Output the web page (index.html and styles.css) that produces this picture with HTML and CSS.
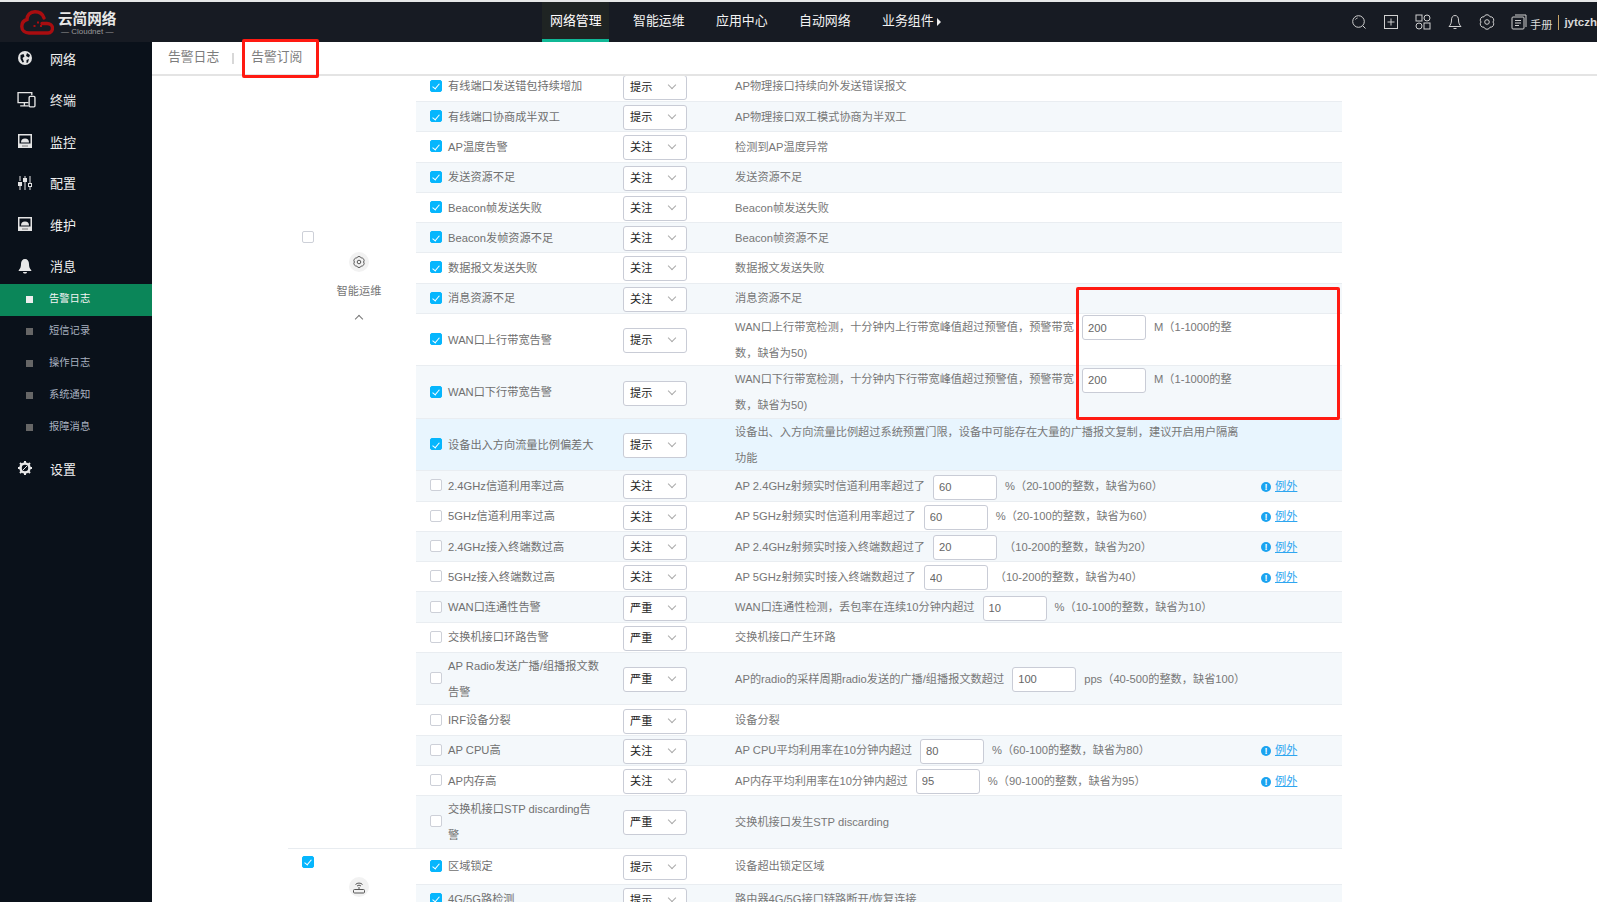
FILE: index.html
```html
<!DOCTYPE html>
<html lang="zh-CN">
<head>
<meta charset="utf-8">
<title>告警订阅</title>
<link rel="stylesheet" href="styles.css">
</head>
<body>
<div class="app">
  <header class="topbar">
    <div class="logo">
      <svg class="logo-cloud" viewBox="0 0 34 25" fill="none"><path d="M24 8C22.500 3.500 18.500 1.800 15 1.800 10 1.800 7 5 7 9.500 3.500 10.500 1.800 13 1.800 16.500 1.800 20.500 5 23 9 23H28C31 23 32.500 20.500 32.500 18 32.500 15.500 30 13.500 27 13.500H22" stroke="#a90d10" stroke-width="3.400" stroke-linecap="round"/><path d="M13.500 15h2v2h-2zM17 11.500h2v2h-2zM20 15h2v2h-2z" fill="#a90d10"/></svg>
      <div class="logo-text">
        <div class="logo-name">云简网络</div>
        <div class="logo-sub">— Cloudnet —</div>
      </div>
    </div>
    <nav class="topnav">
      <a class="topnav-item is-active">网络管理</a>
      <a class="topnav-item">智能运维</a>
      <a class="topnav-item">应用中心</a>
      <a class="topnav-item">自动网络</a>
      <a class="topnav-item">业务组件<span class="caret"></span></a>
    </nav>
    <div class="tools">
      <svg class="tool" viewBox="0 0 16 16" fill="none" stroke="#d0d0d0"><circle cx="7.500" cy="7.500" r="5.800"/><path d="M11.800 11.800L14.500 14.500M4.500 5.500A3.500 3.500 0 0 1 6.500 4"/></svg>
      <svg class="tool" viewBox="0 0 16 16" fill="none" stroke="#d0d0d0"><rect x="1.500" y="1.500" width="13" height="13"/><path d="M8 4.500v7M4.500 8h7"/></svg>
      <svg class="tool" viewBox="0 0 16 16" fill="none" stroke="#d0d0d0"><rect x="1" y="1" width="6" height="6"/><circle cx="12" cy="4" r="3"/><circle cx="4" cy="12" r="3"/><rect x="9" y="9" width="6" height="6"/></svg>
      <svg class="tool" viewBox="0 0 16 16" fill="none" stroke="#d0d0d0"><path d="M8 1.500C5.500 1.500 4.500 3.500 4.500 6c0 3-1 5-2.500 6.500h12C12.500 11 11.500 9 11.500 6c0-2.500-1-4.500-3.500-4.500zM6.500 14.500h3"/></svg>
      <svg class="tool" viewBox="0 0 16 16" fill="none" stroke="#d0d0d0"><path d="M11 2.800A3.200 3.200 0 0 1 14 8 3.200 3.200 0 0 1 11 13.200 3.200 3.200 0 0 1 5 13.200 3.200 3.200 0 0 1 2 8 3.200 3.200 0 0 1 5 2.800 3.200 3.200 0 0 1 11 2.800z"/><circle cx="8" cy="8" r="2.300"/></svg>
      <svg class="tool tool-doc" viewBox="0 0 16 16" fill="none" stroke="#d0d0d0"><path d="M4 1h11v12"/><rect x="1" y="3" width="12" height="12" rx="1"/><path d="M4 6.500h6M4 9h6M4 11.500h4"/></svg>
      <span class="manual">手册</span>
      <span class="tool-sep"></span>
      <span class="user">jytczha</span>
    </div>
  </header>

  <div class="body">
    <aside class="sidebar">
      <div class="menu-item">
        <svg class="menu-icon" viewBox="0 0 16 16"><circle cx="8" cy="8" r="7" fill="#e4e4e4"/><path d="M3.500 5l3-1 1 2.500-2 1.500 1.500 4-1.500.5-2-3.500zM10 3l3 2-1 2.500-3-1.500zM9.500 10l2.500-1-1 3.500-1.500.5z" fill="#0a111a"/></svg>
        <span>网络</span>
      </div>
      <div class="menu-item">
        <svg class="menu-icon menu-icon-wide" viewBox="0 0 18 16" fill="none" stroke="#e4e4e4" stroke-width="1.300"><path d="M11 11H1V1.500h13V4M3 14h8M7 11v3"/><rect x="11.500" y="5" width="5.500" height="10" rx="1"/></svg>
        <span>终端</span>
      </div>
      <div class="menu-item">
        <svg class="menu-icon" viewBox="0 0 16 16"><rect x="1" y="1" width="14" height="14" fill="#e4e4e4"/><rect x="2.500" y="2.500" width="11" height="8" fill="#0a111a"/><path d="M4 9.500a4 4 0 0 1 8 0z" fill="#e4e4e4"/><path d="M5 12.500h6v1H5z" fill="#777"/></svg>
        <span>监控</span>
      </div>
      <div class="menu-item">
        <svg class="menu-icon" viewBox="0 0 16 16" fill="#e4e4e4"><path d="M2.500 1h1v5h-1zM2.500 11h1v4h-1zM7.500 1h1v2h-1zM7.500 7h1v8h-1zM12.500 1h1v7h-1zM12.500 12h1v3h-1z"/><rect x="1" y="7" width="4" height="4"/><rect x="6" y="3" width="4" height="4"/><rect x="11.500" y="8.500" width="3" height="3" fill="none" stroke="#e4e4e4"/></svg>
        <span>配置</span>
      </div>
      <div class="menu-item">
        <svg class="menu-icon" viewBox="0 0 16 16"><rect x="1" y="1" width="14" height="14" fill="#e4e4e4"/><rect x="2.500" y="2.500" width="11" height="8" fill="#0a111a"/><path d="M4 9.500a4 4 0 0 1 8 0z" fill="#e4e4e4"/><path d="M5 12.500h6v1H5z" fill="#777"/></svg>
        <span>维护</span>
      </div>
      <div class="menu-item">
        <svg class="menu-icon" viewBox="0 0 16 16" fill="#e8e8e8"><path d="M8 1C5.500 1 4 3 4 6c0 3-.8 4.800-2.300 6.200v.8h12.600v-.8C12.800 10.800 12 9 12 6c0-3-1.500-5-4-5zM6 14h4c0 1-1 1.500-2 1.500S6 15 6 14z"/></svg>
        <span>消息</span>
      </div>
      <ul class="submenu">
        <li class="sub-item is-active">告警日志</li>
        <li class="sub-item">短信记录</li>
        <li class="sub-item">操作日志</li>
        <li class="sub-item">系统通知</li>
        <li class="sub-item">报障消息</li>
      </ul>
      <div class="menu-item">
        <svg class="menu-icon" viewBox="0 0 16 16" fill="none"><circle cx="8" cy="8" r="4.500" stroke="#e8e8e8" stroke-width="2.600"/><path d="M8 1v3M8 12v3M1 8h3M12 8h3M3 3l2.100 2.100M10.900 10.900L13 13M13 3l-2.100 2.100M5.100 10.900L3 13" stroke="#e8e8e8" stroke-width="2"/><path d="M6 10l4-4" stroke="#e8e8e8" stroke-width="1"/></svg>
        <span>设置</span>
      </div>
    </aside>

    <main class="main">
      <div class="tabs">
        <span class="tab">告警日志</span>
        <span class="tab-sep"></span>
        <span class="tab">告警订阅</span>
      </div>
      <div class="scroll">
        <section class="group">
          <div class="group-side group-side-first">
            <span class="check"></span>
            <svg class="group-icon" viewBox="0 0 20 20" fill="none"><circle cx="10" cy="10" r="10" fill="#f2f2f2"/><path d="M12.300 6A2.500 2.500 0 0 1 14.600 10 2.500 2.500 0 0 1 12.300 14 2.500 2.500 0 0 1 7.700 14 2.500 2.500 0 0 1 5.400 10 2.500 2.500 0 0 1 7.700 6 2.500 2.500 0 0 1 12.300 6z" stroke="#555"/><circle cx="10" cy="10" r="1.800" stroke="#555"/></svg>
            <span class="group-name">智能运维</span>
            <span class="group-fold"></span>
          </div>
          <div class="group-rows">
            <div class="row"><span class="check is-on"></span><div class="label">有线端口发送错包持续增加</div><div class="select">提示</div><div class="desc">AP物理接口持续向外发送错误报文</div></div>
            <div class="row"><span class="check is-on"></span><div class="label">有线端口协商成半双工</div><div class="select">提示</div><div class="desc">AP物理接口双工模式协商为半双工</div></div>
            <div class="row"><span class="check is-on"></span><div class="label">AP温度告警</div><div class="select">关注</div><div class="desc">检测到AP温度异常</div></div>
            <div class="row"><span class="check is-on"></span><div class="label">发送资源不足</div><div class="select">关注</div><div class="desc">发送资源不足</div></div>
            <div class="row"><span class="check is-on"></span><div class="label">Beacon帧发送失败</div><div class="select">关注</div><div class="desc">Beacon帧发送失败</div></div>
            <div class="row"><span class="check is-on"></span><div class="label">Beacon发帧资源不足</div><div class="select">关注</div><div class="desc">Beacon帧资源不足</div></div>
            <div class="row"><span class="check is-on"></span><div class="label">数据报文发送失败</div><div class="select">关注</div><div class="desc">数据报文发送失败</div></div>
            <div class="row"><span class="check is-on"></span><div class="label">消息资源不足</div><div class="select">关注</div><div class="desc">消息资源不足</div></div>
            <div class="row"><span class="check is-on"></span><div class="label">WAN口上行带宽告警</div><div class="select">提示</div><div class="desc">WAN口上行带宽检测，十分钟内上行带宽峰值超过预警值，预警带宽<input class="num" value="200">M（1-1000的整数，缺省为50)</div></div>
            <div class="row"><span class="check is-on"></span><div class="label">WAN口下行带宽告警</div><div class="select">提示</div><div class="desc">WAN口下行带宽检测，十分钟内下行带宽峰值超过预警值，预警带宽<input class="num" value="200">M（1-1000的整数，缺省为50)</div></div>
            <div class="row is-hover"><span class="check is-on"></span><div class="label">设备出入方向流量比例偏差大</div><div class="select">提示</div><div class="desc">设备出、入方向流量比例超过系统预置门限，设备中可能存在大量的广播报文复制，建议开启用户隔离功能</div></div>
            <div class="row"><span class="check"></span><div class="label">2.4GHz信道利用率过高</div><div class="select">关注</div><div class="desc">AP 2.4GHz射频实时信道利用率超过了<input class="num" value="60">%（20-100的整数，缺省为60）</div><div class="extra"><span class="info">!</span><a class="link">例外</a></div></div>
            <div class="row"><span class="check"></span><div class="label">5GHz信道利用率过高</div><div class="select">关注</div><div class="desc">AP 5GHz射频实时信道利用率超过了<input class="num" value="60">%（20-100的整数，缺省为60）</div><div class="extra"><span class="info">!</span><a class="link">例外</a></div></div>
            <div class="row"><span class="check"></span><div class="label">2.4GHz接入终端数过高</div><div class="select">关注</div><div class="desc">AP 2.4GHz射频实时接入终端数超过了<input class="num num-tight" value="20">（10-200的整数，缺省为20）</div><div class="extra"><span class="info">!</span><a class="link">例外</a></div></div>
            <div class="row"><span class="check"></span><div class="label">5GHz接入终端数过高</div><div class="select">关注</div><div class="desc">AP 5GHz射频实时接入终端数超过了<input class="num num-tight" value="40">（10-200的整数，缺省为40）</div><div class="extra"><span class="info">!</span><a class="link">例外</a></div></div>
            <div class="row"><span class="check"></span><div class="label">WAN口连通性告警</div><div class="select">严重</div><div class="desc">WAN口连通性检测，丢包率在连续10分钟内超过<input class="num" value="10">%（10-100的整数，缺省为10）</div></div>
            <div class="row"><span class="check"></span><div class="label">交换机接口环路告警</div><div class="select">严重</div><div class="desc">交换机接口产生环路</div></div>
            <div class="row"><span class="check"></span><div class="label">AP Radio发送广播/组播报文数告警</div><div class="select">严重</div><div class="desc desc-line">AP的radio的采样周期radio发送的广播/组播报文数超过<input class="num" value="100">pps（40-500的整数，缺省100）</div></div>
            <div class="row"><span class="check"></span><div class="label">IRF设备分裂</div><div class="select">严重</div><div class="desc">设备分裂</div></div>
            <div class="row"><span class="check"></span><div class="label">AP CPU高</div><div class="select">关注</div><div class="desc">AP CPU平均利用率在10分钟内超过<input class="num" value="80">%（60-100的整数，缺省为80）</div><div class="extra"><span class="info">!</span><a class="link">例外</a></div></div>
            <div class="row"><span class="check"></span><div class="label">AP内存高</div><div class="select">关注</div><div class="desc">AP内存平均利用率在10分钟内超过<input class="num" value="95">%（90-100的整数，缺省为95）</div><div class="extra"><span class="info">!</span><a class="link">例外</a></div></div>
            <div class="row"><span class="check"></span><div class="label">交换机接口STP discarding告警</div><div class="select">严重</div><div class="desc">交换机接口发生STP discarding</div></div>
          </div>
        </section>
        <section class="group">
          <div class="group-side">
            <span class="check is-on"></span>
            <svg class="group-icon" viewBox="0 0 20 20" fill="none"><circle cx="10" cy="10" r="10" fill="#f2f2f2"/><path d="M6.500 7.500a5 5 0 0 1 7 0M8 9a3 3 0 0 1 4 0M10 10v3" stroke="#555"/><rect x="4.500" y="12.500" width="11" height="3.500" rx="1" stroke="#555"/></svg>
          </div>
          <div class="group-rows">
            <div class="row row-first"><span class="check is-on"></span><div class="label">区域锁定</div><div class="select">提示</div><div class="desc">设备超出锁定区域</div></div>
            <div class="row"><span class="check is-on"></span><div class="label">4G/5G路检测</div><div class="select">提示</div><div class="desc">路由器4G/5G接口链路断开/恢复连接</div></div>
          </div>
        </section>
      </div>
    </main>
  </div>
  <div class="mark mark-tab"></div>
  <div class="mark mark-inputs"></div>
</div>
</body>
</html>
```
FILE: styles.css
```css
* { box-sizing: border-box; }
html, body { margin: 0; height: 100%; }
body {
  font-family: "Liberation Sans", "Noto Sans CJK SC", sans-serif;
  font-size: 11.2px;
  color: #777;
  background: #fff;
  overflow: hidden;
}
.app { position: relative; height: 902px; display: flex; flex-direction: column; overflow: hidden; }

/* top bar */
.topbar {
  flex: none;
  height: 42px;
  display: flex;
  border-top: 2px solid #e6e7e8;
  background: #171b23;
  color: #fff;
}
.logo { width: 542px; display: flex; align-items: flex-start; padding: 8px 0 0 20px; }
.logo-cloud { width: 34px; height: 25px; }
.logo-text { margin-left: 4px; text-align: center; }
.logo-name { font-size: 14.600px; line-height: 16px; font-weight: 700; color: #e8e8e8; margin-top: 1px; }
.logo-sub { font-size: 8px; line-height: 9px; color: #9a9a9a; }
.topnav { display: flex; gap: 16px; }
.topnav-item {
  width: 67px;
  height: 40px;
  line-height: 37px;
  padding-left: 8px;
  font-size: 12.900px;
  color: #f2f2f2;
  white-space: nowrap;
}
.topnav-item.is-active { background: #1f2423; border-bottom: 3px solid #10b896; color: #fff; }
.caret {
  display: inline-block;
  margin-left: 3px;
  border-left: 4px solid #eee;
  border-top: 4px solid transparent;
  border-bottom: 4px solid transparent;
  vertical-align: -1px;
}
.tools { flex: 1; display: flex; align-items: center; padding-left: 410px; color: #ddd; white-space: nowrap; overflow: hidden; }
.tool { width: 16px; height: 16px; margin-right: 16px; flex: none; }
.tool-doc { margin-right: 3px; }
.manual { font-size: 11.200px; margin-top: 3px; }
.tool-sep { width: 1px; height: 15px; background: #c8a468; margin: 0 5px 0 6px; flex: none; }
.user { font-size: 11.500px; font-weight: 700; color: #d8d8d8; }

/* layout */
.body { flex: 1; min-height: 0; display: flex; }
.sidebar { flex: none; width: 152px; background: #0a111a; overflow: hidden; }
.main { flex: 1; min-width: 0; display: flex; flex-direction: column; }

/* sidebar */
.menu-item {
  height: 41.600px;
  display: flex;
  align-items: center;
  padding-left: 17px;
  font-size: 13px;
  color: #f0f0f0;
}
.menu-item:first-child { margin-top: -4.800px; }
.menu-icon { width: 16px; height: 16px; margin-right: 17px; flex: none; }
.menu-icon-wide { width: 19px; height: 17px; margin-right: 14px; }
.submenu { list-style: none; margin: -3px 0 3.500px; padding: 0; }
.sub-item {
  position: relative;
  height: 32px;
  line-height: 30px;
  padding-left: 49px;
  font-size: 10.300px;
  color: #a9b2c0;
}
.sub-item::before {
  content: "";
  position: absolute;
  left: 26px;
  top: 12px;
  width: 7px;
  height: 7px;
  background: #666;
}
.sub-item.is-active { background: #0b8659; color: #f4f4f4; }
.sub-item.is-active::before { background: #eee; }

/* tabs */
.tabs {
  flex: none;
  height: 34px;
  display: flex;
  align-items: center;
  padding: 0 0 6px 16px;
  border-bottom: 2px solid #e4e4e4;
  font-size: 12.800px;
  color: #7d7d7d;
}
.tab-sep { width: 2px; height: 11px; background: #d8d8d8; margin: 6px 17px 0 13px; }

/* table */
.scroll { flex: 1; min-height: 0; overflow: hidden; padding-left: 136px; }
.group { width: 1054px; display: flex; box-shadow: inset 0 -1px #e8ecf0; }
.group:first-child { margin-top: -4.300px; }
.group-side {
  flex: none;
  width: 128px;
  padding: 7px 0 0 14px;
  display: flex;
  flex-direction: column;
  align-items: center;
}
.group-side-first { padding-top: 159px; }
.group-side .check { align-self: flex-start; }
.group-icon { width: 20px; height: 20px; margin-top: 9px; flex: none; }
.group-name { margin-top: 6px; line-height: 26px; color: #777; }
.group-fold {
  width: 6px;
  height: 6px;
  margin-top: 12px;
  border-left: 1px solid #777;
  border-top: 1px solid #777;
  transform: rotate(45deg);
}
.group-rows { flex: 1; min-width: 0; }
.row {
  display: grid;
  grid-template-columns: 18px 175px 112px 510px auto;
  align-items: center;
  min-height: 30.280px;
  padding: 1px 0 0 14px;
  box-shadow: inset 0 -1px #e9edf1;
  line-height: 25.750px;
}
.row:nth-child(even) { background: #f4f8fb; }
.row.is-hover { background: #e8f5fe; }
.row-first { min-height: 36px; }
.check {
  position: relative;
  display: block;
  width: 12px;
  height: 12px;
  border: 1px solid #cdd0d8;
  border-radius: 2px;
  background: #fff;
}
.row .check { margin-bottom: 3px; }
.check.is-on { background: #06b6fd; border-color: #06b6fd; }
.check.is-on::after {
  content: "";
  position: absolute;
  left: 3px;
  top: 1.500px;
  width: 3px;
  height: 6px;
  border-right: 1.500px solid #fff;
  border-bottom: 1.500px solid #fff;
  transform: rotate(40deg);
}
.label { padding-right: 23px; color: #707070; }
.select {
  position: relative;
  width: 64px;
  height: 25px;
  line-height: 23px;
  padding-left: 6px;
  border: 1px solid #c9ccd6;
  border-radius: 3px;
  background: #fff;
  color: #222;
}
.select::after {
  content: "";
  position: absolute;
  right: 11px;
  top: 6px;
  width: 5px;
  height: 5px;
  border-right: 1px solid #aaa;
  border-bottom: 1px solid #aaa;
  transform: rotate(45deg);
}
.desc { color: #777; }
.desc-line { white-space: nowrap; }
.num {
  width: 64px;
  height: 25px;
  margin: 0 8px;
  padding: 1px 0 0 5px;
  border: 1px solid #c9ccd6;
  border-radius: 3px;
  background: #fff;
  font: inherit;
  color: #666;
  vertical-align: middle;
  outline: none;
}
.num-tight { margin-right: 7px; }
.extra { display: flex; align-items: center; padding-left: 16px; white-space: nowrap; }
.info {
  width: 10px;
  height: 10px;
  margin-right: 4px;
  border-radius: 50%;
  background: #1ba3f0;
  color: #fff;
  font-size: 9px;
  font-weight: 700;
  line-height: 10px;
  text-align: center;
}
.link { color: #2ea6f0; text-decoration: underline; }

/* red annotations drawn over the screenshot */
.mark { position: absolute; border: 3px solid #ff1a12; border-radius: 2px; pointer-events: none; }
.mark-tab { left: 242px; top: 39px; width: 77px; height: 39px; }
.mark-inputs { left: 1076px; top: 287px; width: 264px; height: 133px; }
```
